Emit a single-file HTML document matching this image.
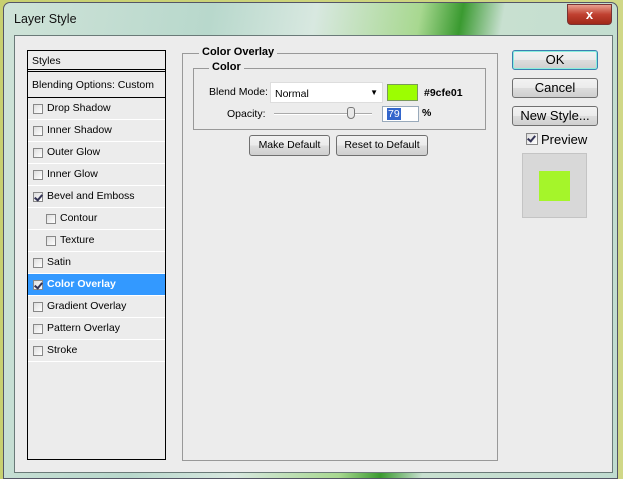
<!DOCTYPE html>
<html><head><style>
*{box-sizing:border-box;margin:0;padding:0}
body{width:623px;height:479px;overflow:hidden;position:relative;font-family:"Liberation Sans",sans-serif;font-size:10.5px;color:#000;
background:linear-gradient(90deg,#c8d070 0%,#d0d888 100%)}
.frame{position:absolute;left:3px;top:2px;width:615px;height:477px;border:1px solid #556;border-radius:7px 7px 0 0;
background:linear-gradient(100deg,#cfe3d8 0%,#b8d8cc 30%,#d8e8e0 45%,#a8d890 60%,#3a9a30 66%,#c8e0d0 72%,#c0dcd0 100%)}
.title{position:absolute;left:14px;top:12px;font-family:"Liberation Sans",sans-serif;font-size:12.5px;color:#111}
.close{position:absolute;left:567px;top:4px;width:45px;height:21px;border:1px solid #733;border-radius:0 0 4px 4px;
background:linear-gradient(#e8a090,#c04030 50%,#a02818);color:#fff;text-align:center;font:bold 13px "Liberation Sans",sans-serif;line-height:19px}
.content{position:absolute;left:14px;top:35px;width:599px;height:438px;background:#ececec;border:1px solid #6a7a78}
.lp{position:absolute;left:27px;top:50px;width:139px;height:410px;border:1px solid #000;background:#ececec}
.row{position:absolute;left:0;width:137px;height:22px;border-bottom:1px solid #fff;line-height:21px;padding-left:19px}
.cb{position:absolute;top:6px;width:10px;height:10px;border:1px solid #888;background:linear-gradient(135deg,#ddd,#fff)}
.cb.on::after{content:"";position:absolute;left:2px;top:0px;width:3px;height:6px;border-right:2px solid #335;border-bottom:2px solid #335;transform:rotate(40deg)}
.sel{background:#3399ff;color:#fff;font-weight:bold}
.lg{position:absolute;background:#ececec;font-weight:bold;font-size:11px;padding:0 3px}
.btn{position:absolute;border:1px solid #707070;border-radius:3px;background:linear-gradient(#f2f2f2,#ebebeb 50%,#dddddd 51%,#cfcfcf);text-align:center}
.rb{font-size:13px}
</style></head><body>
<div class="frame"></div>
<div class="title">Layer Style</div>
<div class="close">x</div>
<div class="content"></div>
<div class="lp">
 <div class="row" style="top:0;padding-left:4px;height:21px;border-bottom:3px double #000">Styles</div>
 <div class="row" style="top:23px;padding-left:4px;height:24px;border-bottom:1px solid #000;line-height:23px">Blending Options: Custom</div>
 <div class="row" style="top:47px"><span class="cb" style="left:5px"></span>Drop Shadow</div>
 <div class="row" style="top:69px"><span class="cb" style="left:5px"></span>Inner Shadow</div>
 <div class="row" style="top:91px"><span class="cb" style="left:5px"></span>Outer Glow</div>
 <div class="row" style="top:113px"><span class="cb" style="left:5px"></span>Inner Glow</div>
 <div class="row" style="top:135px"><span class="cb on" style="left:5px"></span>Bevel and Emboss</div>
 <div class="row" style="top:157px;padding-left:32px"><span class="cb" style="left:18px"></span>Contour</div>
 <div class="row" style="top:179px;padding-left:32px"><span class="cb" style="left:18px"></span>Texture</div>
 <div class="row" style="top:201px"><span class="cb" style="left:5px"></span>Satin</div>
 <div class="row sel" style="top:223px"><span class="cb on" style="left:5px"></span>Color Overlay</div>
 <div class="row" style="top:245px"><span class="cb" style="left:5px"></span>Gradient Overlay</div>
 <div class="row" style="top:267px"><span class="cb" style="left:5px"></span>Pattern Overlay</div>
 <div class="row" style="top:289px"><span class="cb" style="left:5px"></span>Stroke</div>
</div>
<div style="position:absolute;left:182px;top:53px;width:316px;height:408px;border:1px solid #999"></div>
<div class="lg" style="left:199px;top:46px">Color Overlay</div>
<div style="position:absolute;left:193px;top:68px;width:293px;height:62px;border:1px solid #999"></div>
<div class="lg" style="left:209px;top:61px">Color</div>
<div style="position:absolute;left:209px;top:86px">Blend Mode:</div>
<div style="position:absolute;left:270px;top:82px;width:113px;height:21px;background:#fff;border:1px solid #ddd;padding:5px 4px">Normal<span style="position:absolute;right:4px;top:5px;font-size:8px">▼</span></div>
<div style="position:absolute;left:387px;top:84px;width:31px;height:17px;background:#9cfe01;border:1px solid #7a9a5a"></div>
<div style="position:absolute;left:424px;top:87px;font-weight:bold">#9cfe01</div>
<div style="position:absolute;left:227px;top:108px">Opacity:</div>
<div style="position:absolute;left:274px;top:113px;width:98px;height:2px;border-top:1px solid #aaa;border-bottom:1px solid #fff"></div>
<div style="position:absolute;left:347px;top:107px;width:8px;height:12px;border:1px solid #777;border-radius:3px 3px 4px 4px;background:#e8e8e8"></div>
<div style="position:absolute;left:382px;top:106px;width:37px;height:16px;background:#fff;border:1px solid #9ab"><span style="position:absolute;left:4px;top:1px;background:#3366cc;color:#fff;padding:0 1px">79</span></div>
<div style="position:absolute;left:422px;top:107px;font-weight:bold">%</div>
<div class="btn" style="left:249px;top:135px;width:81px;height:21px;line-height:19px">Make Default</div>
<div class="btn" style="left:336px;top:135px;width:92px;height:21px;line-height:19px">Reset to Default</div>
<div class="btn rb" style="left:512px;top:50px;width:86px;height:20px;line-height:18px;border-color:#3c7fb1;box-shadow:inset 0 0 0 1px #8ed">OK</div>
<div class="btn rb" style="left:512px;top:78px;width:86px;height:20px;line-height:18px">Cancel</div>
<div class="btn rb" style="left:512px;top:106px;width:86px;height:20px;line-height:18px">New Style...</div>
<div class="cb on" style="left:526px;top:133px;width:12px;height:12px"></div>
<div class="rb" style="position:absolute;left:541px;top:132px">Preview</div>
<div style="position:absolute;left:522px;top:153px;width:65px;height:65px;background:#d8d8d8;border:1px solid #c4c4c4"></div>
<div style="position:absolute;left:539px;top:171px;width:31px;height:30px;background:#a5f52a"></div>
</body></html>
